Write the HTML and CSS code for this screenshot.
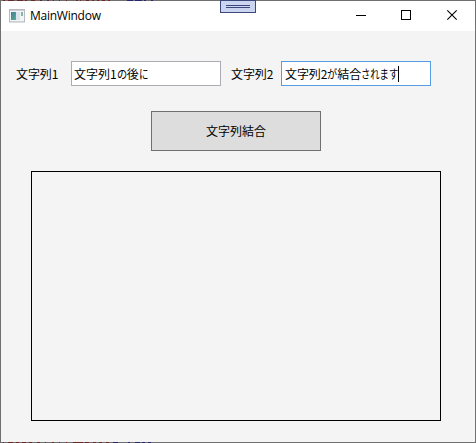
FILE: index.html
```html
<!DOCTYPE html>
<html lang="ja">
<head>
<meta charset="utf-8">
<title>MainWindow</title>
<link rel="stylesheet" href="styles.css">
</head>
<body>
<div class="window">
  <header class="titlebar">
    <svg class="app-icon" width="16" height="14" viewBox="0 0 16 14">
      <defs><linearGradient id="pane" x1="0" y1="0" x2="1" y2="1"><stop offset="0" stop-color="#4577a8"/><stop offset="1" stop-color="#58b384"/></linearGradient></defs>
      <rect x=".5" y=".5" width="15" height="12.5" fill="#f3f4f5" stroke="#b8babd"/>
      <path d="M1 1.5h14M1 12.5h14" stroke="#cbced2"/>
      <rect x="2" y="3" width="5" height="8" fill="url(#pane)"/>
      <rect x="7" y="3" width="4" height="8" fill="#dce5ee"/>
      <rect x="12" y="3" width="2" height="4" fill="#86b5a8"/>
    </svg>
    <h1 class="title">MainWindow</h1>
    <div class="controls">
      <svg width="46" height="30" viewBox="0 0 46 30"><path d="M18 14.5h10" stroke="#000"/></svg>
      <svg width="46" height="30" viewBox="0 0 46 30"><rect x="17.5" y="9.5" width="9" height="9" fill="none" stroke="#000"/></svg>
      <svg width="46" height="30" viewBox="0 0 46 30"><path d="M17.3 9.3l9.4 9.4M26.7 9.3l-9.4 9.4" stroke="#000" stroke-width="1.1"/></svg>
    </div>
  </header>
  <main class="content">
    <div class="fields">
      <label class="label">文字列1</label>
      <div class="textbox"><span>文字列1</span><span class="kana kana-wide">の</span><span>後</span><span class="kana kana-ni">に</span></div>
      <label class="label label-second">文字列2</label>
      <div class="textbox focused"><span>文字列2</span><span class="kana kana-wide">が</span><span>結合</span><span class="kana kana-run">されます</span><span class="caret"></span></div>
    </div>
    <button class="join">文字列結合</button>
    <div class="result"></div>
  </main>
  <div class="marks marks-top"></div>
  <div class="marks marks-bottom"></div>
  <div class="handle"></div>
</div>
</body>
</html>
```

FILE: styles.css
```css
* { box-sizing: border-box; }
body { margin: 0; }
.window {
  position: relative;
  width: 476px;
  height: 443px;
  border: 1px solid #707070;
  background: #f4f4f4;
  color: #000;
  font: 12px/16px "Noto Sans CJK JP", sans-serif;
}
.titlebar {
  display: flex;
  align-items: center;
  height: 30px;
  padding-left: 8px;
  background: #fff;
}
.title {
  margin: 0 0 0 5px;
  font: 12px/16px "Open Sans", sans-serif;
  letter-spacing: -.25px;
}
.controls { display: flex; margin-left: auto; margin-right: -1px; }
.content { display: flex; flex-direction: column; padding: 30px 30px 0; }
.fields { display: flex; margin-left: -15px; height: 25px; }
.label { width: 55px; padding-top: 5px; white-space: nowrap; letter-spacing: -.1px; }
.label-second { width: 50px; margin-left: 10px; }
.textbox {
  display: flex;
  width: 150px;
  height: 25px;
  padding: 4px 0 0 2px;
  border: 1px solid #abadb3;
  background: #fff;
  white-space: nowrap;
}
.focused { border-color: #569de5; }
.focused { padding-left: 3px; letter-spacing: -.1px; }
.kana { flex: none; transform-origin: 0 0; letter-spacing: 0; }
.kana-wide { width: 10px; transform: scaleX(.85); }
.kana-ni { width: 9px; transform: scaleX(.8); }
.kana-run { width: 37px; transform: scaleX(.775); }
.caret { width: 1px; height: 16px; background: #000; }
.join {
  width: 170px;
  height: 40px;
  margin: 25px 0 20px 120px;
  padding: 0;
  border: 1px solid #707070;
  background: #ddd;
  color: #000;
  font: 12px/16px "Noto Sans CJK JP", sans-serif;
}
.result { width: 410px; height: 250px; border: 1px solid #000; }
.marks {
  position: absolute;
  left: 0;
  width: 152px;
  height: 1px;
  background:
    linear-gradient(90deg, transparent 112px, #252571 112px 117px, transparent 117px 127px, #252571 127px 129px, transparent 129px 134px, #252571 134px 139px, transparent 139px 141px, #252571 141px 144px, transparent 144px 147px, #252571 147px 150px, transparent 150px),
    linear-gradient(90deg, transparent 2px, #702525 2px 3px, transparent 3px 7px, #702525 7px 12px, transparent 12px 15px, #702525 15px 18px, transparent 18px 21px, #702525 21px 25px, transparent 25px 28px, #702525 28px 31px, transparent 31px 36px, #702525 36px 39px, transparent 39px 44px, #702525 44px 45px, transparent 45px 51px, #702525 51px 53px, transparent 53px 58px, #702525 58px 59px, transparent 59px 65px, #702525 65px 66px, transparent 66px 72px, #702525 72px 82px, transparent 82px 84px, #702525 84px 88px, transparent 88px 92px, #702525 92px 95px, transparent 95px 98px, #702525 98px 101px, transparent 101px 105px, #702525 105px 108px, transparent 108px);
}
.marks-top {
  top: -1px;
  background:
    linear-gradient(90deg, transparent 126px, #252571 126px 132px, transparent 132px 134px, #252571 134px 141px, transparent 141px 143px, #252571 143px 145px, transparent 145px 150px, #252571 150px),
    linear-gradient(90deg, transparent 2px, #702525 2px 4px, transparent 4px 7px, #702525 7px 13px, transparent 13px 16px, #702525 16px 22px, transparent 22px 24px, #702525 24px 26px, transparent 26px 30px, #702525 30px 34px, transparent 34px 39px, #702525 39px 41px, transparent 41px 46px, #702525 46px 48px, transparent 48px 52px, #702525 52px 53px, transparent 53px 58px, #702525 58px 59px, transparent 59px 65px, #702525 65px 66px, transparent 66px 75px, #702525 75px 77px, transparent 77px 79px, #702525 79px 80px, transparent 80px 85px, #702525 85px 88px, transparent 88px 91px, #702525 91px 93px, transparent 93px 96px, #702525 96px 98px, transparent 98px 101px, #702525 101px 104px, transparent 104px 107px, #702525 107px 109px, transparent 109px);
}
.marks-bottom { bottom: -1px; }
.handle {
  position: absolute;
  left: 219px;
  top: -1px;
  width: 36px;
  height: 13px;
  border: 1px solid #3c477a;
  background:
    linear-gradient(#3c477a, #3c477a) 5px 4px / 24px 1px no-repeat,
    linear-gradient(#3c477a, #3c477a) 5px 6px / 24px 1px no-repeat,
    #ccd5f0;
}
```
